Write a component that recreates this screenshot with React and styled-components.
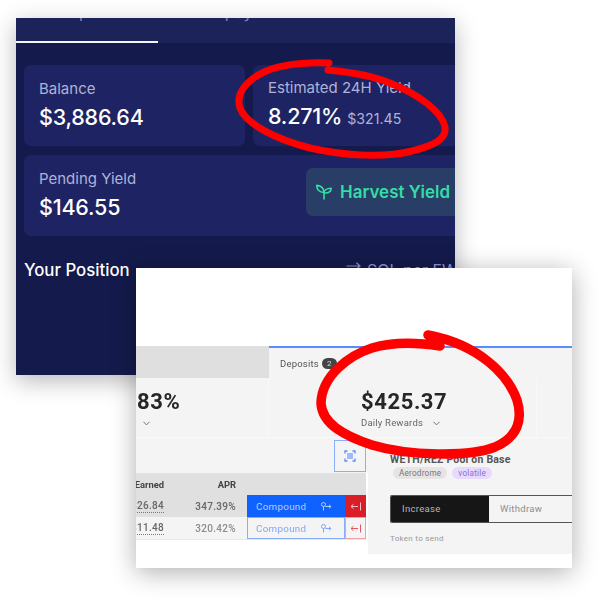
import React from "react"
import styled, { createGlobalStyle } from "styled-components"
import { ChevronDown } from "lucide-react"

const GlobalStyle = createGlobalStyle`
  html, body {
    margin: 0;
    padding: 0;
    background: #fff;
  }
`

const Canvas = styled.div`
  position: relative;
  width: 600px;
  height: 600px;
  overflow: hidden;
  background: #fff;
`

/* the two pasted screenshots sit freely on the canvas */
const DarkShot = styled.section`
  position: absolute;
  left: 16px;
  top: 18px;
  width: 439px;
  height: 357px;
  overflow: hidden;
  background: #141a4b;
  box-shadow: 0 6px 22px rgba(0, 0, 0, 0.28);
  font-family: Inter, "Liberation Sans", sans-serif;
  color: #fff;
`

const TabStrip = styled.div`
  display: flex;
  height: 25px;
  background: #1c2359;
`

const Tab = styled.div`
  width: ${props => props.width}px;
  height: 25px;
  box-sizing: border-box;
  overflow: hidden;
  border-bottom: 2px solid ${props => (props.active ? "#f4f5fb" : "transparent")};
  color: #7d83b5;
  font-size: 16px;
  line-height: 16px;
  text-align: center;

  span {
    display: block;
    margin-top: -14px;
  }
`

const CardArea = styled.div`
  width: 452px;
  padding: 22px 0 0 8px;
  display: grid;
  grid-template-columns: 221px 221px;
  gap: 9px 8px;
`

const Card = styled.div`
  grid-column: ${props => (props.wide ? "1 / 3" : "auto")};
  height: 81px;
  box-sizing: border-box;
  padding: 0 15px;
  border-radius: 7px;
  background: #1e2463;
  display: flex;
  align-items: center;
  justify-content: space-between;
`

const CardLabel = styled.div`
  color: #aeb2d9;
  font-size: 15px;
  line-height: 18px;
`

const CardValue = styled.div`
  margin-top: 5px;
  font-size: 21.5px;
  line-height: 28px;
  font-weight: 500;
  letter-spacing: -0.2px;
  display: flex;
  align-items: baseline;
  gap: 5px;
`

const CardNote = styled.span`
  color: #aeb2d9;
  font-size: 14.2px;
  font-weight: 400;
  letter-spacing: 0;
`

const HarvestButton = styled.div`
  width: 168px;
  height: 48px;
  margin: -7px -15px 0 0;
  box-sizing: border-box;
  padding-left: 10px;
  border-radius: 7px;
  background: #283e67;
  color: #34dca6;
  font-size: 17px;
  font-weight: 600;
  display: flex;
  align-items: center;
  gap: 8px;
  white-space: nowrap;
`

const PositionRow = styled.div`
  width: 458px;
  margin: 24px 0 0 8px;
  display: flex;
  align-items: center;
  justify-content: space-between;
`

const PositionTitle = styled.h2`
  margin: 0;
  font-size: 16.8px;
  line-height: 20px;
  font-weight: 500;
`

const RateLink = styled.div`
  display: flex;
  align-items: center;
  gap: 6px;
  height: 20px;
  color: #8f97d8;
  font-size: 16px;
  white-space: nowrap;

  svg {
    margin-bottom: 8px;
  }
`

const LightShot = styled.section`
  position: absolute;
  left: 136px;
  top: 268px;
  width: 436px;
  height: 300px;
  overflow: hidden;
  background: #fff;
  box-shadow: 0 4px 24px rgba(0, 0, 0, 0.32);
  font-family: Roboto, "Liberation Sans", sans-serif;
`

const Blurred = styled.div`
  filter: blur(0.6px);
`

const TopGap = styled.div`
  height: 78px;
`

const TabsRow = styled.div`
  display: flex;
  height: 32px;
`

const EmptyTab = styled.div`
  width: 133px;
  background: #dfdfdf;
`

const ActiveTab = styled.div`
  flex: 1;
  box-sizing: border-box;
  border-top: 2px solid #5b8dfa;
  background: #f4f4f4;
  padding-left: 11px;
  display: flex;
  align-items: center;
  gap: 3px;
  color: #555;
  font-size: 9.5px;
  letter-spacing: 0.2px;
`

const CountBadge = styled.span`
  width: 15px;
  height: 11px;
  border-radius: 6px;
  background: #444;
  color: #ddd;
  font-size: 8px;
  line-height: 11px;
  text-align: center;
`

const StatsRow = styled.div`
  display: grid;
  grid-template-columns: 133px 268px 35px;
  height: 60px;
  background: #f4f4f4;
  border-bottom: 1px solid #f9f9f9;
  box-sizing: border-box;
`

const StatCell = styled.div`
  border-right: 1px solid #f8f8f8;
  padding: 11px 0 0 ${props => props.$inset}px;
  box-sizing: border-box;
`

const StatValue = styled.div`
  color: #262626;
  font-size: 22px;
  line-height: 26px;
  font-weight: 700;
  letter-spacing: 0.6px;
`

const StatCaption = styled.div`
  display: flex;
  align-items: center;
  gap: 8px;
  margin-top: 1px;
  color: #666;
  font-size: 9.5px;
  line-height: 14px;
  letter-spacing: 0.2px;
`

const ChevronOnly = styled(StatCaption)`
  height: 14px;
  padding-left: 4px;
`

const Lower = styled.div`
  display: flex;
`

const TableSide = styled.div`
  width: 232px;
  flex-shrink: 0;
`

const ToolBar = styled.div`
  height: 35px;
  background: #f4f4f4;
  display: flex;
  justify-content: flex-end;
  padding: 2px 2px 0 0;
  box-sizing: border-box;
`

const ToolButton = styled.div`
  width: 32px;
  height: 32px;
  box-sizing: border-box;
  border: 1px solid #8aaefc;
  color: #5b8dfa;
  display: flex;
  align-items: center;
  justify-content: center;
`

const TableRow = styled.div`
  display: grid;
  grid-template-columns: 28px 72px 11px 98px 21px;
  width: 230px;
  height: ${props => props.height}px;
  background: ${props => props.bg};
  align-items: stretch;
  border-bottom: ${props => (props.last ? "1px solid #e8e8e8" : "none")};
  box-sizing: border-box;
`

const Cell = styled.div`
  display: flex;
  align-items: center;
  justify-content: flex-end;
  overflow: hidden;
  white-space: nowrap;
  color: ${props => props.color || "#666"};
  font-size: ${props => (props.head ? 9.4 : 10)}px;
  font-weight: ${props => (props.head ? 700 : 500)};
  letter-spacing: ${props => (props.head ? 0 : 0.3)}px;
`

const Underlined = styled.span`
  border-bottom: 1px dotted #777;
  line-height: 12px;
`

const CompoundButton = styled.div`
  box-sizing: border-box;
  border: 1px solid ${props => (props.solid ? "#0f62fe" : "#8aaefc")};
  background: ${props => (props.solid ? "#0f62fe" : "transparent")};
  color: ${props => (props.solid ? "#b5cdfd" : "#7fa6fb")};
  font-size: 9.8px;
  letter-spacing: 0.3px;
  padding: 0 12px 0 8px;
  display: flex;
  align-items: center;
  justify-content: space-between;
`

const ExitButton = styled.div`
  box-sizing: border-box;
  border: 1px solid ${props => (props.solid ? "#da1e28" : "#f0a0a5")};
  background: ${props => (props.solid ? "#da1e28" : "transparent")};
  color: ${props => (props.solid ? "#f7c0c3" : "#e8545c")};
  display: flex;
  align-items: center;
  justify-content: center;
`

const FormSide = styled.div`
  flex: 1;
  min-width: 0;
  height: 116px;
  box-sizing: border-box;
  background: #f4f4f4;
  padding: 15px 0 0 22px;
`

const FormTitle = styled.div`
  color: #555;
  font-size: 10.5px;
  line-height: 13px;
  font-weight: 700;
  letter-spacing: 0.2px;
  white-space: nowrap;
`

const Pills = styled.div`
  display: flex;
  gap: 5px;
  margin: 1px 0 0 3px;
`

const Pill = styled.span`
  height: 12px;
  padding: 0 6px;
  border-radius: 6px;
  background: ${props => props.bg};
  color: ${props => props.color};
  font-size: 8.2px;
  line-height: 12px;
  letter-spacing: 0.2px;
`

const Segmented = styled.div`
  display: flex;
  height: 28px;
  margin-top: 16px;
  box-sizing: border-box;
  border: 1px solid #555;
  border-right: 0;
  border-radius: 2px 0 0 2px;
  overflow: hidden;
`

const Segment = styled.div`
  width: ${props => props.width}px;
  flex-shrink: 0;
  box-sizing: border-box;
  padding-left: 11px;
  background: ${props => (props.active ? "#161616" : "#f4f4f4")};
  color: ${props => (props.active ? "#b5b5b5" : "#8d8d8d")};
  font-size: 9.5px;
  line-height: 26px;
  letter-spacing: 0.3px;
`

const FieldLabel = styled.div`
  margin-top: 11px;
  color: #999;
  font-size: 8px;
  letter-spacing: 0.3px;
`

const Scribble = styled.svg`
  position: absolute;
  left: 0;
  top: 0;
  width: 600px;
  height: 600px;
  pointer-events: none;
`

const InkStroke = styled.path`
  fill: none;
  stroke: #ff0000;
  stroke-width: ${props => props.weight};
  stroke-linecap: round;
  stroke-linejoin: round;
`

const SproutIcon = () => (
  <svg width="16" height="16" viewBox="0 0 16 16" fill="none" stroke="currentColor" strokeWidth="1.6" strokeLinejoin="round" strokeLinecap="round">
    <path d="M8 15V8.5C8 5 5.5 1.5 .8 1.2 .6 5 3 8.5 8 8.5" />
    <path d="M8 9C8 6.5 10.5 4.2 15.2 4.2 15.2 7 13 9.5 8 9" />
  </svg>
)

const RateArrow = () => (
  <svg width="15" height="8" viewBox="0 0 15 8" fill="none" stroke="currentColor" strokeWidth="1.2">
    <path d="M.5 4H14M10.5 .8 14 4 10.5 7.2" />
  </svg>
)

const CompoundIcon = () => (
  <svg width="11" height="9" viewBox="0 0 11 9" fill="none" stroke="currentColor" strokeWidth="1">
    <circle cx="2.5" cy="2.5" r="2" />
    <path d="M2.5 4.5V8.5M4.5 4.5H10M8 2.8 10 4.5 8 6.2" />
  </svg>
)

const ExitIcon = () => (
  <svg width="12" height="9" viewBox="0 0 12 9" fill="none" stroke="currentColor" strokeWidth="1">
    <path d="M1 4.5H8M3.5 2.2 1 4.5 3.5 6.8M10.5 0.5V8.5" />
  </svg>
)

const FitIcon = () => (
  <svg width="12" height="12" viewBox="0 0 12 12" fill="none" stroke="currentColor" strokeWidth="1.3">
    <path d="M1 3.5V1H3.5M8.5 1H11V3.5M11 8.5V11H8.5M3.5 11H1V8.5" />
    <rect x="3" y="3" width="6" height="6" fill="currentColor" opacity="0.55" stroke="none" />
  </svg>
)

const App = () => {
  return (
    <Canvas>
      <GlobalStyle />

      <DarkShot>
        <TabStrip>
          <Tab active width={142}><span>Deposit</span></Tab>
          <Tab width={142}><span>Repay</span></Tab>
        </TabStrip>
        <CardArea>
          <Card>
            <div>
              <CardLabel>Balance</CardLabel>
              <CardValue>$3,886.64</CardValue>
            </div>
          </Card>
          <Card>
            <div>
              <CardLabel>Estimated 24H Yield</CardLabel>
              <CardValue>8.271% <CardNote>$321.45</CardNote></CardValue>
            </div>
          </Card>
          <Card wide>
            <div>
              <CardLabel>Pending Yield</CardLabel>
              <CardValue>$146.55</CardValue>
            </div>
            <HarvestButton>
              <SproutIcon />
              Harvest Yield
            </HarvestButton>
          </Card>
        </CardArea>
        <PositionRow>
          <PositionTitle>Your Position</PositionTitle>
          <RateLink>
            <RateArrow />
            SOL per FWOG
          </RateLink>
        </PositionRow>
      </DarkShot>

      <LightShot>
        <Blurred>
          <TopGap />
          <TabsRow>
            <EmptyTab />
            <ActiveTab>Deposits <CountBadge>2</CountBadge></ActiveTab>
          </TabsRow>
          <StatsRow>
            <StatCell $inset={1}>
              <StatValue>83%</StatValue>
              <ChevronOnly><ChevronDown size={11} /></ChevronOnly>
            </StatCell>
            <StatCell $inset={92}>
              <StatValue>$425.37</StatValue>
              <StatCaption>Daily Rewards <ChevronDown size={11} /></StatCaption>
            </StatCell>
            <StatCell $inset={0} />
          </StatsRow>
          <Lower>
            <TableSide>
              <ToolBar>
                <ToolButton><FitIcon /></ToolButton>
              </ToolBar>
              <TableRow height={22} bg="#e0e0e0">
                <Cell head color="#444">Earned</Cell>
                <Cell head color="#444">APR</Cell>
                <div />
                <div />
                <div />
              </TableRow>
              <TableRow height={22} bg="#e0e0e0">
                <Cell><Underlined>$26.84</Underlined></Cell>
                <Cell>347.39%</Cell>
                <div />
                <CompoundButton solid>Compound <CompoundIcon /></CompoundButton>
                <ExitButton solid><ExitIcon /></ExitButton>
              </TableRow>
              <TableRow height={23} bg="#f4f4f4" last>
                <Cell><Underlined>$11.48</Underlined></Cell>
                <Cell color="#8d8d8d">320.42%</Cell>
                <div />
                <CompoundButton>Compound <CompoundIcon /></CompoundButton>
                <ExitButton><ExitIcon /></ExitButton>
              </TableRow>
            </TableSide>
            <FormSide>
              <FormTitle>WETH/REZ Pool on Base</FormTitle>
              <Pills>
                <Pill bg="#e8e4e4" color="#777">Aerodrome</Pill>
                <Pill bg="#e8daff" color="#8a6fd0">volatile</Pill>
              </Pills>
              <Segmented>
                <Segment active width={98}>Increase</Segment>
                <Segment width={106}>Withdraw</Segment>
              </Segmented>
              <FieldLabel>Token to send</FieldLabel>
            </FormSide>
          </Lower>
        </Blurred>
      </LightShot>

      <Scribble viewBox="0 0 600 600">
        <InkStroke
          weight={7}
          d="M329 63C300 62 275 66 260 74C243 84 236 96 240 108C246 124 275 139 310 148C345 156 385 158 412 151C432 146 447 140 445 127C442 112 420 95 390 83C370 75 350 72 328 70"
        />
        <InkStroke
          weight={9.5}
          d="M440 346C415 342 392 342 372 348C350 355 322 375 321 403C322 425 347 437 372 445C408 456 470 457 495 447C518 437 523 420 517 400C508 375 480 345 428 335"
        />
      </Scribble>
    </Canvas>
  )
}

export default App
